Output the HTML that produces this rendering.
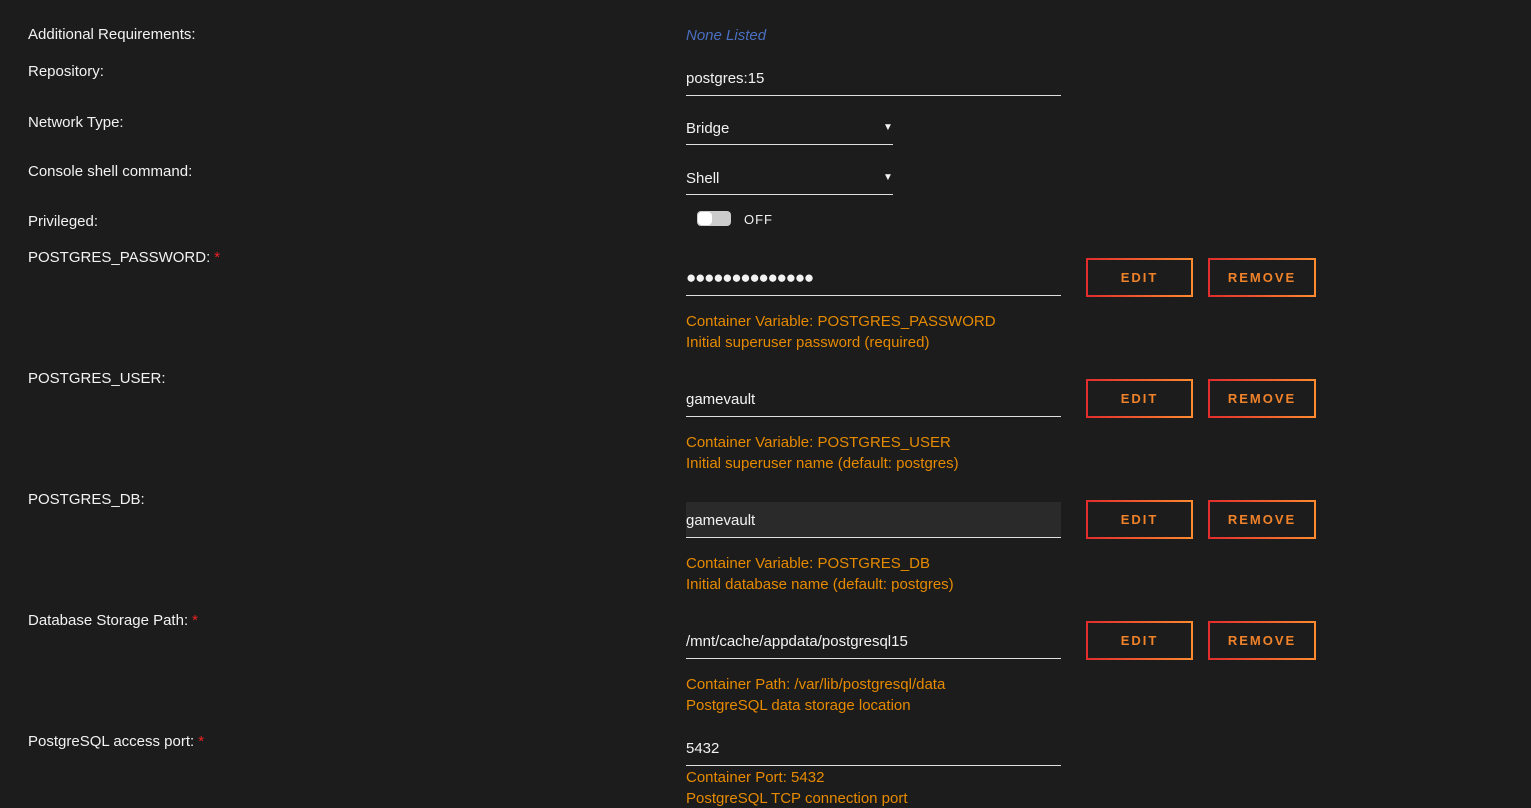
<!DOCTYPE html>
<html><head><meta charset="utf-8"><style>
body{margin:0;width:1531px;height:796px;background:#1c1c1c;overflow:hidden;position:relative;font-family:"Liberation Sans",sans-serif;font-size:15px;color:#f2f2f2}
.a{position:absolute;white-space:nowrap;line-height:18px;margin-top:2px}
.l{left:28px}
.req{color:#e22;margin-left:4px}
.u{position:absolute;height:1px;background:#e0e0e0}
.o{color:#e68a00}
.btn{position:absolute;border:2px solid;border-image:linear-gradient(90deg,#e22d2d,#ff8a2f) 1;border-radius:3px;font-weight:bold;font-size:13px;letter-spacing:2px;color:#f0822a;display:flex;align-items:center;justify-content:center;box-sizing:border-box;height:39px}
.e{left:1086px;width:107px}.r{left:1208px;width:108px}
.arr{position:absolute;font-size:10px}
</style></head><body>
<div class="a l" style="top:24px">Additional Requirements:</div>
<div class="a" style="left:686px;top:25px;color:#4a6fc0;font-style:italic">None Listed</div>
<div class="a l" style="top:61px">Repository:</div>
<div class="a" style="left:686px;top:68px">postgres:15</div><div class="u" style="left:686px;width:375px;top:95px"></div>
<div class="a l" style="top:112px">Network Type:</div>
<div class="a" style="left:686px;top:118px">Bridge</div><div class="arr" style="left:883px;top:122px">▼</div><div class="u" style="left:686px;width:207px;top:144px"></div>
<div class="a l" style="top:161px">Console shell command:</div>
<div class="a" style="left:686px;top:168px">Shell</div><div class="arr" style="left:883px;top:172px">▼</div><div class="u" style="left:686px;width:207px;top:194px"></div>
<div class="a l" style="top:211px">Privileged:</div>
<div style="position:absolute;left:697px;top:211px;width:34px;height:15px;border-radius:4px;background:#ccc"></div>
<div style="position:absolute;left:698px;top:212px;width:14px;height:13px;border-radius:4px;background:#fff"></div>
<div class="a" style="left:744px;top:209px;font-size:13px;letter-spacing:1px">OFF</div>

<div class="a l" style="top:247px">POSTGRES_PASSWORD:<span class="req">*</span></div>
<div class="a" style="left:686px;top:267px;font-size:17px;letter-spacing:-1.2px">●●●●●●●●●●●●●●</div><div class="u" style="left:686px;width:375px;top:295px"></div>
<div class="btn e" style="top:258px">EDIT</div><div class="btn r" style="top:258px">REMOVE</div>
<div class="a o" style="left:686px;top:311px">Container Variable: POSTGRES_PASSWORD</div>
<div class="a o" style="left:686px;top:332px">Initial superuser password (required)</div>

<div class="a l" style="top:368px">POSTGRES_USER:</div>
<div class="a" style="left:686px;top:389px">gamevault</div><div class="u" style="left:686px;width:375px;top:416px"></div>
<div class="btn e" style="top:379px">EDIT</div><div class="btn r" style="top:379px">REMOVE</div>
<div class="a o" style="left:686px;top:432px">Container Variable: POSTGRES_USER</div>
<div class="a o" style="left:686px;top:453px">Initial superuser name (default: postgres)</div>

<div class="a l" style="top:489px">POSTGRES_DB:</div>
<div style="position:absolute;left:686px;top:502px;width:375px;height:35px;background:#2a2a2a"></div>
<div class="a" style="left:686px;top:510px">gamevault</div><div class="u" style="left:686px;width:375px;top:537px"></div>
<div class="btn e" style="top:500px">EDIT</div><div class="btn r" style="top:500px">REMOVE</div>
<div class="a o" style="left:686px;top:553px">Container Variable: POSTGRES_DB</div>
<div class="a o" style="left:686px;top:574px">Initial database name (default: postgres)</div>

<div class="a l" style="top:610px">Database Storage Path:<span class="req">*</span></div>
<div class="a" style="left:686px;top:631px">/mnt/cache/appdata/postgresql15</div><div class="u" style="left:686px;width:375px;top:658px"></div>
<div class="btn e" style="top:621px">EDIT</div><div class="btn r" style="top:621px">REMOVE</div>
<div class="a o" style="left:686px;top:674px">Container Path: /var/lib/postgresql/data</div>
<div class="a o" style="left:686px;top:695px">PostgreSQL data storage location</div>

<div class="a l" style="top:731px">PostgreSQL access port:<span class="req">*</span></div>
<div class="a" style="left:686px;top:738px">5432</div><div class="u" style="left:686px;width:375px;top:765px"></div>
<div class="a o" style="left:686px;top:767px">Container Port: 5432</div>
<div class="a o" style="left:686px;top:788px">PostgreSQL TCP connection port</div>
</body></html>
